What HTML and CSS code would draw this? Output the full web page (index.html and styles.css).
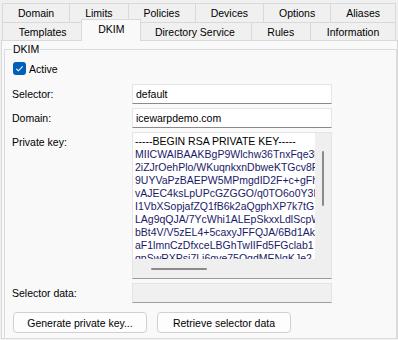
FILE: index.html
```html
<!DOCTYPE html>
<html lang="en">
<head>
    <meta charset="UTF-8">
    <title>Domain - DKIM</title>
    <link rel="stylesheet" href="styles.css">
</head>
<body>
    <div class="tabs">
        <div class="tab-row">
            <div class="tab">Domain</div>
            <div class="tab">Limits</div>
            <div class="tab">Policies</div>
            <div class="tab">Devices</div>
            <div class="tab">Options</div>
            <div class="tab">Aliases</div>
        </div>
        <div class="tab-row">
            <div class="tab">Templates</div>
            <div class="tab active">DKIM</div>
            <div class="tab">Directory Service</div>
            <div class="tab">Rules</div>
            <div class="tab">Information</div>
        </div>
    </div>

    <div class="panel">
        <fieldset class="group">
            <legend>DKIM</legend>

            <label class="check">
                <span class="box">
                    <svg width="13" height="13" viewBox="0 0 13 13"><path d="M3.3 6.8 L5.4 8.8 L9.7 4.4" fill="none" stroke="#fff" stroke-width="1.1"/></svg>
                </span>
                Active
            </label>

            <div class="fields">
                <div class="label">Selector:</div>
                <div class="input">default</div>

                <div class="label">Domain:</div>
                <div class="input">icewarpdemo.com</div>

                <div class="label top">Private key:</div>
                <div class="keybox">
                    <div class="keytext"><div class="first">-----BEGIN RSA PRIVATE KEY-----</div><div>MIICWAIBAAKBgP9Wlchw36TnxFqe3kLm</div><div>2iZJrOehPlo/WKuqnkxnDbweKTGcv8Rw</div><div>9UYVaPzBAEPW5MPmgdID2F+c+gFhT2</div><div>vAJEC4ksLpUPcGZGGO/q0TO6o0Y3Hn</div><div>I1VbXSopjafZQ1fB6k2aQgphXP7k7tG</div><div>LAg9qQJA/7YcWhi1ALEpSkxxLdlScpW</div><div>bBt4V/V5zEL4+5caxyJFFQJA/6Bd1Ak</div><div>aF1lmnCzDfxceLBGhTwIIFd5FGclab1</div><div>gpSwRXPsi7Li6qve75QqdMENqKJe2</div></div>
                    <div class="vscroll"><span class="thumb"></span></div>
                    <div class="hscroll"><span class="thumb"></span></div>
                    <div class="corner"></div>
                </div>

                <div class="label">Selector data:</div>
                <div class="input disabled"></div>
            </div>

            <div class="buttons">
                <button type="button">Generate private key...</button>
                <button type="button">Retrieve selector data</button>
            </div>
        </fieldset>
    </div>
</body>
</html>
```

FILE: styles.css
```css
body { margin: 0; background-color: #f0f0f0; font-family: "Liberation Sans", Arial, sans-serif; font-size: 10.5px; color: #000; }

/* tab strip, two rows */
.tabs { margin: 0 2px; padding-top: 3px; }
.tab-row { display: flex; height: 19px; }
.tab-row + .tab-row { height: 18px; }
.tab { flex: 1 1 auto; display: flex; align-items: center; justify-content: center; white-space: nowrap; background-color: #f0f0f0; border: 1px solid #d9d9d9; border-bottom: none; margin-left: -1px; }
.tab:first-child { margin-left: 0; }
.tab.active { position: relative; z-index: 1; background-color: #f9f9f9; margin: -3px -2px 0 -2px; height: 22px; padding-bottom: 3px; box-sizing: border-box; }

.panel { margin-left: 1px; height: 299px; box-sizing: border-box; border: 1px solid #d9d9d9; background-color: #f9f9f9; padding: 1px 0 0 2px; }

.group { margin: 1px 0 0 0; padding: 0 0 5px 7px; min-width: 0; border: 1px solid #dcdcdc; }
.group legend { padding: 0 1px; line-height: 13px; }

.check { display: flex; align-items: center; gap: 3px; height: 13px; margin: 6px 0 0 1px; }
.box { display: flex; width: 13px; height: 13px; border-radius: 3px; background-color: #005fb8; }

.fields { display: grid; grid-template-columns: 120px 200px; row-gap: 4px; margin-top: 9px; }
.label { align-self: center; }
.label.top { align-self: start; padding-top: 4px; }

.input { height: 20px; box-sizing: border-box; display: flex; align-items: center; padding-left: 3px; background-color: #fff; border: 1px solid #e5e5e5; border-bottom-color: #8a8a8a; }
.input.disabled { background-color: #f0f0f0; border-color: #e3e3e3; border-bottom-color: #a0a0a0; }

.keybox { display: grid; grid-template-columns: 1fr 16px; grid-template-rows: 126px 19px; background-color: #fff; border: 1px solid #e5e5e5; border-bottom-color: #9a9a9a; }
.keytext { overflow: hidden; white-space: pre; padding: 2px 0 0 2px; line-height: 13px; color: #1a1a68; }
.keytext .first { color: #000; }
.vscroll, .hscroll, .corner { background-color: #efefef; }
.vscroll .thumb { display: block; width: 2px; height: 55px; margin: 18px 0 0 7px; background-color: #8a8a8a; border-radius: 1px; }
.hscroll .thumb { display: block; width: 56px; height: 2px; margin: 9px 0 0 18px; background-color: #8a8a8a; border-radius: 1px; }

.buttons { display: flex; gap: 10px; margin: 9px 0 0 1px; }
button { width: 134px; height: 21px; font-family: inherit; font-size: 10.5px; color: #000; background-color: #fdfdfd; border: 1px solid #d0d0d0; border-radius: 4px; padding: 0; }
```
